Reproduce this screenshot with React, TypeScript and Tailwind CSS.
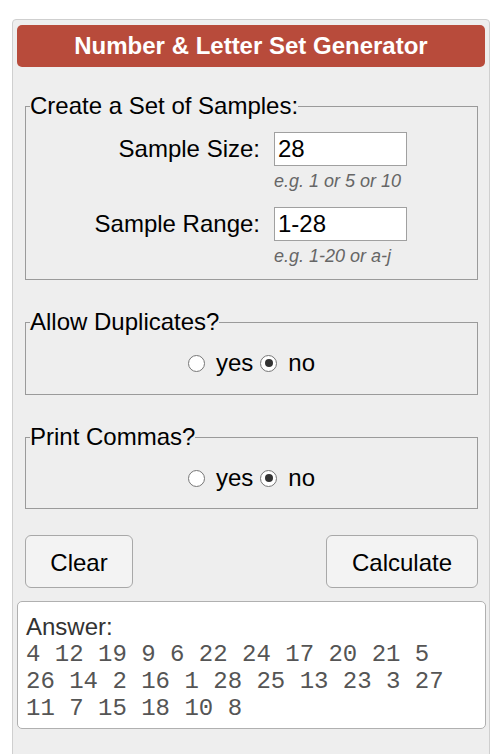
import React from "react";

const sans = { fontFamily: '"Liberation Sans", Arial, sans-serif' };

function Radio({ checked }: { checked?: boolean }) {
  return (
    <span className="box-border inline-flex h-[17px] w-[17px] min-w-[17px] shrink-0 items-center justify-center rounded-full border border-[#767676] bg-white">
      {checked ? <span className="h-[8px] w-[8px] shrink-0 rounded-full bg-[#333]" /> : null}
    </span>
  );
}

function RadioRow() {
  return (
    <div className="flex h-[28px] items-center justify-center text-[24px] leading-[28px] text-black">
      <Radio />
      <span className="ml-[11px]">yes</span>
      <span className="w-[7px]" />
      <Radio checked />
      <span className="ml-[11px]">no</span>
    </div>
  );
}

export default function App() {
  return (
    <div className="min-h-[754px] bg-white pt-[19px] pl-[12px]" style={sans}>
      <div className="h-[760px] w-[478px] rounded-[4px] border border-[#cfcfcf] bg-[#eeeeee] pt-[5px]">
        <div className="mx-[4px] flex h-[42px] w-[468px] items-center justify-center rounded-[5px] bg-[#b84b3b] text-[24px] font-bold text-white">
          Number &amp; Letter Set Generator
        </div>

        <fieldset className="mt-[25px] ml-[12px] w-[453px] border border-[#9a9a9a] pb-[12px]">
          <legend className="ml-[4px] text-[24px] leading-[28px] text-black">Create a Set of Samples:</legend>
          <div className="mt-[12px] flex items-center">
            <div className="w-[234px] text-right text-[24px] leading-[28px] text-black">Sample Size:</div>
            <div className="ml-[14px] flex h-[34px] w-[133px] items-center border border-[#a0a0a0] bg-white pl-[3px] text-[24px] text-black">
              28
            </div>
          </div>
          <div className="mt-[5px] pl-[248px] text-[18px] italic leading-[21px] text-[#666]">e.g. 1 or 5 or 10</div>
          <div className="mt-[15px] flex items-center">
            <div className="w-[234px] text-right text-[24px] leading-[28px] text-black">Sample Range:</div>
            <div className="ml-[14px] flex h-[34px] w-[133px] items-center border border-[#a0a0a0] bg-white pl-[3px] text-[24px] text-black">
              1-28
            </div>
          </div>
          <div className="mt-[5px] pl-[248px] text-[18px] italic leading-[21px] text-[#666]">e.g. 1-20 or a-j</div>
        </fieldset>

        <fieldset className="mt-[28px] ml-[12px] w-[453px] border border-[#9a9a9a] pt-[13px] pb-[17px]">
          <legend className="ml-[4px] text-[24px] leading-[28px] text-black">Allow Duplicates?</legend>
          <RadioRow />
        </fieldset>

        <fieldset className="mt-[28px] ml-[12px] w-[453px] border border-[#9a9a9a] pt-[13px] pb-[16px]">
          <legend className="ml-[4px] text-[24px] leading-[28px] text-black">Print Commas?</legend>
          <RadioRow />
        </fieldset>

        <div className="mt-[26px] ml-[12px] flex w-[453px] justify-between">
          <div className="flex h-[53px] w-[108px] items-center justify-center rounded-[6px] border border-[#a8a8a8] bg-[#f3f3f3] pt-[2px] text-[24px] text-black">
            Clear
          </div>
          <div className="flex h-[53px] w-[152px] items-center justify-center rounded-[6px] border border-[#a8a8a8] bg-[#f3f3f3] pt-[2px] text-[24px] text-black">
            Calculate
          </div>
        </div>

        <div className="mt-[13px] ml-[4px] w-[469px] rounded-[5px] border border-[#b0b0b0] bg-white px-[8px] pt-[11px] pb-[6px]">
          <div className="text-[24px] leading-[28px] text-[#333]">Answer:</div>
          <div
            className="text-[24px] leading-[27px] text-[#555]"
            style={{ fontFamily: '"Liberation Mono", "Courier New", monospace' }}
          >
            <div>4 12 19 9 6 22 24 17 20 21 5</div>
            <div>26 14 2 16 1 28 25 13 23 3 27</div>
            <div>11 7 15 18 10 8</div>
          </div>
        </div>
      </div>
    </div>
  );
}
